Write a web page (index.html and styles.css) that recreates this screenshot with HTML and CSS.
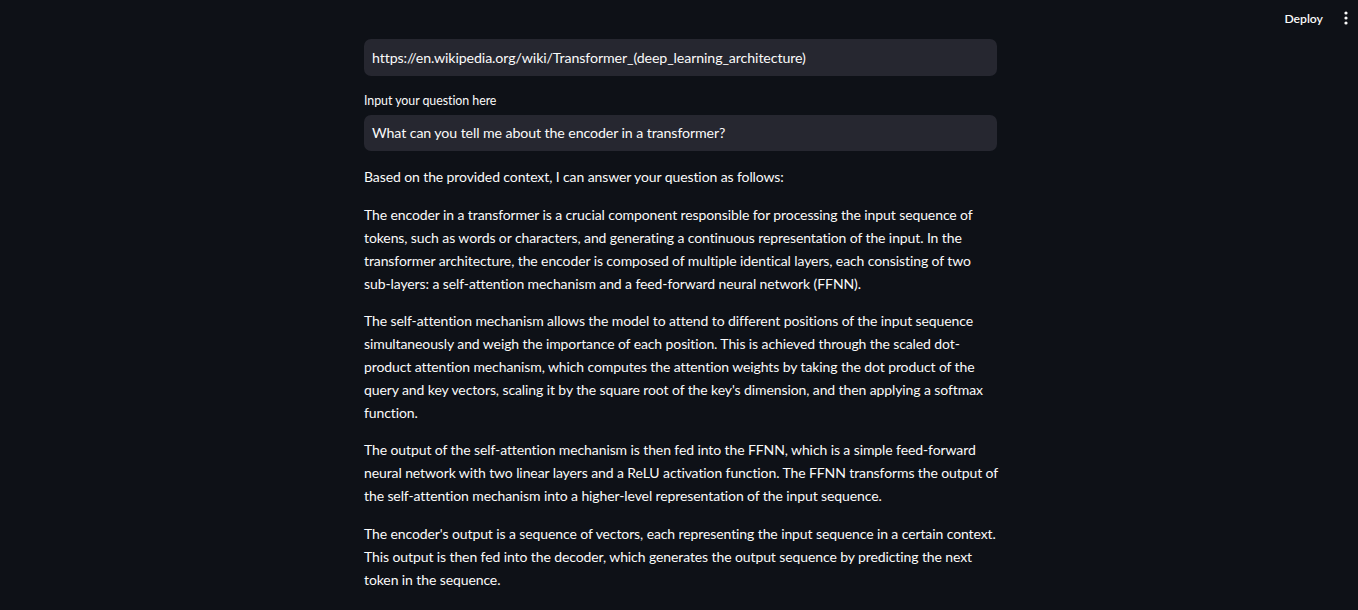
FILE: index.html
```html
<!DOCTYPE html>
<html>
<head>
<meta charset="utf-8">
<link rel="stylesheet" href="styles.css">
</head>
<body>
<header class="topbar">
  <span class="deploy">Deploy</span>
  <span class="menu"><svg width="4" height="14" viewBox="0 0 4 14"><circle cx="2" cy="2" r="1.6" fill="#fafafa"/><circle cx="2" cy="7" r="1.6" fill="#fafafa"/><circle cx="2" cy="12" r="1.6" fill="#fafafa"/></svg></span>
</header>
<main class="container">
  <div class="field first">
    <div class="input">https://en.wikipedia.org/wiki/Transformer_(deep_learning_architecture)</div>
  </div>
  <div class="field">
    <label class="label">Input your question here</label>
    <div class="input">What can you tell me about the encoder in a transformer?</div>
  </div>
  <div class="answer">
    <p>Based on the provided context, I can answer your question as follows:</p>
    <p>The encoder in a transformer is a crucial component responsible for processing the input sequence of<br>tokens, such as words or characters, and generating a continuous representation of the input. In the<br>transformer architecture, the encoder is composed of multiple identical layers, each consisting of two<br>sub-layers: a self-attention mechanism and a feed-forward neural network (FFNN).</p>
    <p>The self-attention mechanism allows the model to attend to different positions of the input sequence<br>simultaneously and weigh the importance of each position. This is achieved through the scaled dot-<br>product attention mechanism, which computes the attention weights by taking the dot product of the<br>query and key vectors, scaling it by the square root of the key's dimension, and then applying a softmax<br>function.</p>
    <p>The output of the self-attention mechanism is then fed into the FFNN, which is a simple feed-forward<br>neural network with two linear layers and a ReLU activation function. The FFNN transforms the output of<br>the self-attention mechanism into a higher-level representation of the input sequence.</p>
    <p>The encoder's output is a sequence of vectors, each representing the input sequence in a certain context.<br>This output is then fed into the decoder, which generates the output sequence by predicting the next<br>token in the sequence.</p>
  </div>
</main>
</body>
</html>
```
FILE: styles.css
```css
html, body {
  margin: 0;
  padding: 0;
  background: #0e1117;
  color: #fafafa;
  font-family: "Lato", "Noto Sans", sans-serif;
  height: 610px;
  overflow: hidden;
}
.topbar {
  position: absolute;
  top: 0;
  right: 0;
  display: flex;
  align-items: center;
  gap: 21px;
  height: 36px;
  padding-right: 10px;
}
.deploy {
  font-size: 12.2px;
  font-weight: 600;
  color: #fafafa;
}
.menu {
  display: flex;
  align-items: center;
}
.container {
  width: 633px;
  margin: 0 0 0 364px;
  box-sizing: border-box;
  padding-top: 39px;
}
.field {
  display: flex;
  flex-direction: column;
  margin-bottom: 14px;
}
.label {
  font-size: 12.4px;
  line-height: 21.6px;
  margin-bottom: 3.6px;
  letter-spacing: -0.05px;
}
.input {
  background: #262730;
  border-radius: 7px;
  height: 36.5px;
  display: flex;
  align-items: center;
  padding: 0 8px;
  font-size: 14.2px;
  letter-spacing: -0.1px;
  white-space: nowrap;
}
.answer p {
  margin: 0 0 14.4px 0;
  font-size: 14px;
  letter-spacing: -0.1px;
  line-height: 23px;
  white-space: nowrap;
}
```
